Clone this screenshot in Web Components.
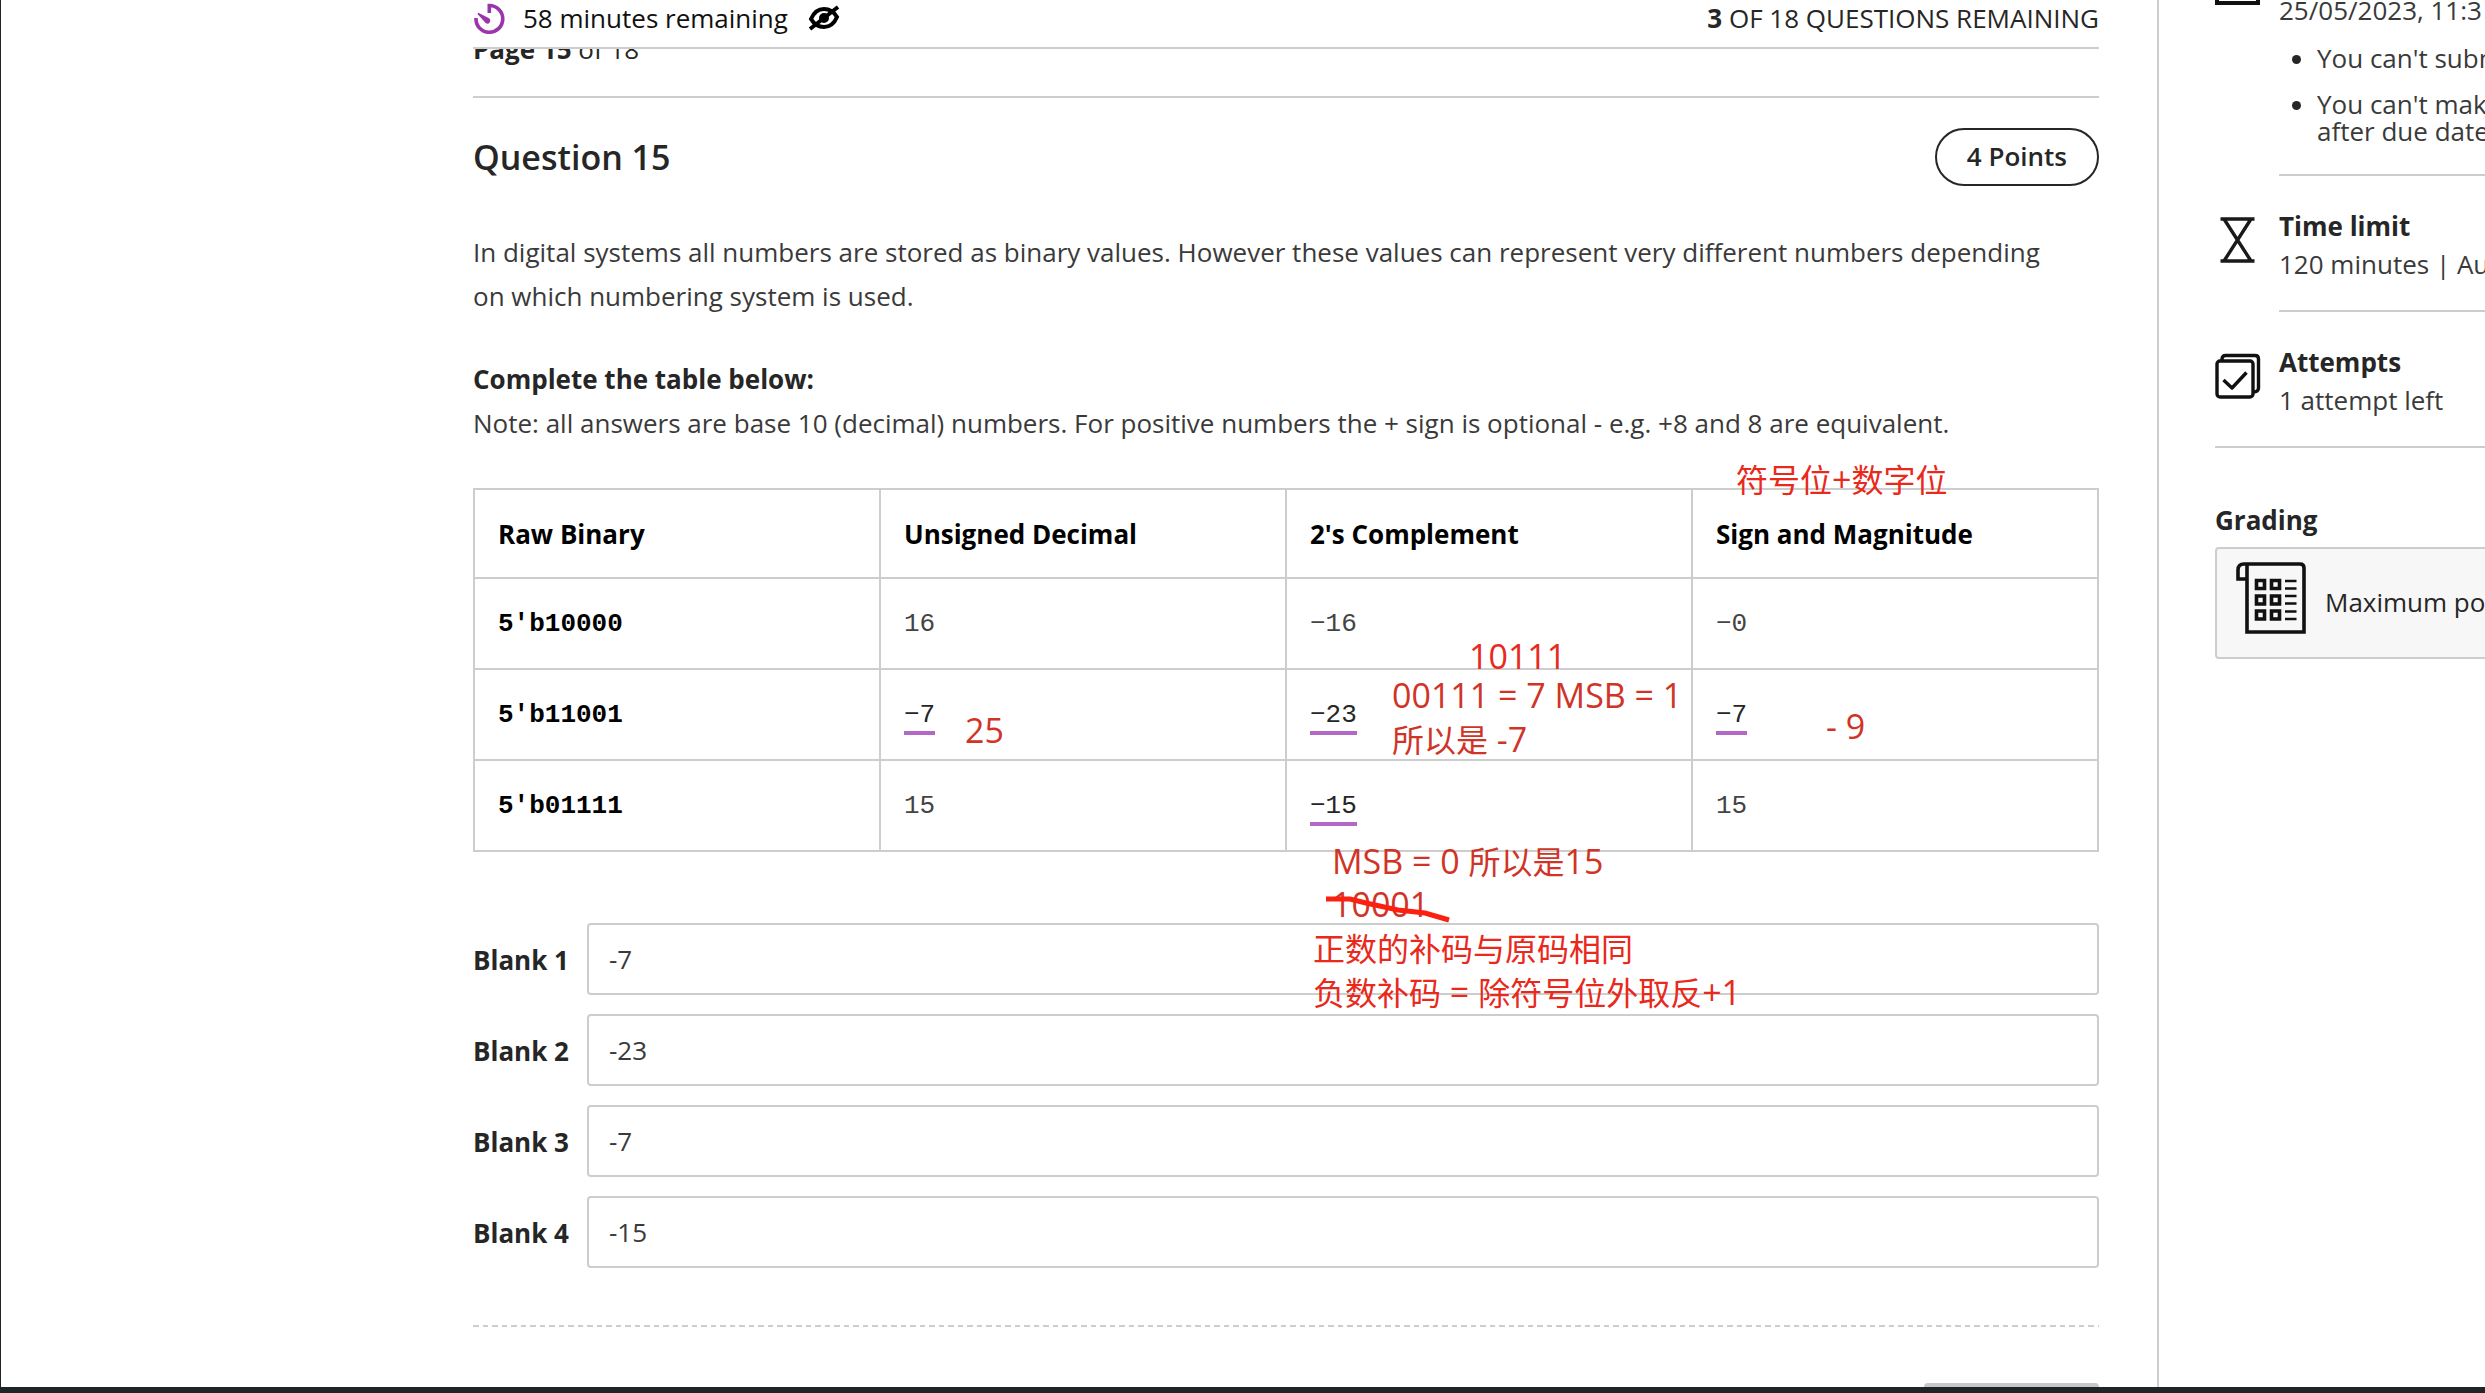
<!DOCTYPE html>
<html lang="en">
<head>
<meta charset="utf-8">
<title>Question 15</title>
<style>
html, body { height: 100%; }
body { margin: 0; background: #fff; color: #262626; font: 26px/44px "Open Sans", "Noto Sans CJK SC", sans-serif; }
</style>
</head>
<body>
<quiz-shell>
  <quiz-header slot="header"></quiz-header>
  <quiz-question></quiz-question>
  <quiz-notes slot="notes"></quiz-notes>
  <quiz-sidebar slot="side"></quiz-sidebar>
</quiz-shell>
<script>
class Base extends HTMLElement {
  constructor() {
    super();
    this.attachShadow({ mode: 'open' }).innerHTML = '<style>*{box-sizing:border-box}</style>' + this.view();
  }
}

customElements.define('quiz-shell', class extends Base {
  view() { return `
<style>
:host { display: flex; height: 100vh; box-sizing: border-box; overflow: hidden; border-left: 1px solid #1d2526; border-bottom: 6px solid #1d2526; }
main { flex: 1; min-width: 0; display: flex; flex-direction: column; padding: 0 58px 0 472px; }
.body { position: relative; flex: 1; min-height: 0; }
.scroll { height: 100%; overflow: hidden; }
aside { flex: none; width: 328px; overflow: hidden; border-left: 2px solid #cdcdcd; padding-left: 56px; }
</style>
<main><slot name="header"></slot><div class="body"><div class="scroll"><slot></slot></div><slot name="notes"></slot></div></main>
<aside><slot name="side"></slot></aside>`; }
});

customElements.define('quiz-header', class extends Base {
  view() { return `
<style>
:host { display: flex; flex: none; align-items: center; height: 49px; padding-bottom: 11px; box-sizing: border-box; border-bottom: 2px solid #cdcdcd; }
.time { display: flex; align-items: center; flex: 1; color: #111; }
.clock { margin-right: 18px; }
button { display: flex; border: 0; background: none; padding: 0; margin-left: 20px; color: #000; }
</style>
<div class="time">
<svg class="clock" width="32" height="34" viewBox="0 0 32 34" fill="none" stroke="#9a35ab" stroke-width="3.6"><path d="M16.300 12V4.500A13.400 13.400 0 1 1 3 17"/><path d="M5 12.500 16 18.200a2.200 2.200 0 0 1-2.600 3.400Z" fill="#9a35ab" stroke-width="1.600"/></svg>
<span>58 minutes remaining</span>
<button aria-label="Hide time"><svg width="32" height="26" viewBox="0 0 32 26" fill="none" stroke="currentColor" stroke-width="4"><path d="M3 14C6 7 11 4 16 4s10 3 13 8c-3 7-8 10-13 10S6 19 3 14Z"/><circle cx="16" cy="13" r="3"/><path d="M2 24 30 2"/></svg></button>
</div>
<div><b>3</b> OF 18 QUESTIONS REMAINING</div>`; }
});

customElements.define('answer-table', class extends Base {
  view() { return `
<style>
:host { display: block; margin-top: 43px; }
table { width: 100%; table-layout: fixed; border-collapse: collapse; }
tr { height: 91px; }
thead tr { height: 89px; }
th, td { border: 2px solid #cdcdcd; padding: 0 23px; text-align: left; vertical-align: middle; }
th { color: #000; font-weight: 700; }
tbody th, td { font-family: "Liberation Mono", monospace; }
td { color: #444; }
u { display: inline-block; text-decoration: none; border-bottom: 4px solid #b268c4; line-height: 32px; margin-top: 4px; color: #262626; }
</style>
<table>
<thead><tr><th scope="col">Raw Binary</th><th scope="col">Unsigned Decimal</th><th scope="col">2's Complement</th><th scope="col">Sign and Magnitude</th></tr></thead>
<tbody>
<tr><th scope="row">5'b10000</th><td>16</td><td>−16</td><td>−0</td></tr>
<tr><th scope="row">5'b11001</th><td><u>−7</u></td><td><u>−23</u></td><td><u>−7</u></td></tr>
<tr><th scope="row">5'b01111</th><td>15</td><td><u>−15</u></td><td>15</td></tr>
</tbody>
</table>`; }
});

customElements.define('blank-field', class extends Base {
  view() {
    const n = this.getAttribute('n'), v = this.getAttribute('value');
    return `
<style>
:host { display: flex; align-items: center; gap: 16px; }
label { flex: none; width: 98px; padding-top: 2px; font-weight: 700; white-space: nowrap; }
input { flex: 1; min-width: 0; height: 72px; border: 2px solid #cdcdcd; border-radius: 4px; padding: 0 20px; font: inherit; color: #3a3a3a; background: transparent; }
</style>
<label for="f">Blank ${n}</label><input id="f" type="text" value="${v}">`; }
});

customElements.define('quiz-question', class extends Base {
  view() { return `
<style>
:host { display: block; }
.page { margin-top: -22px; padding-bottom: 25px; border-bottom: 2px solid #cdcdcd; }
.head { display: flex; align-items: center; justify-content: space-between; padding-top: 30px; }
h2 { margin: 0; font-size: 34px; font-weight: 600; }
.points { height: 58px; padding: 0 30px; border: 2px solid #262626; border-radius: 29px; line-height: 53px; font-weight: 600; }
p { margin: 44px 0 0; padding-right: 40px; color: #3a3a3a; }
p + p { margin-top: 39px; }
p b { color: #262626; }
.blanks { display: grid; gap: 19px; margin-top: 71px; }
.rule { height: 2px; margin-top: 57px; background: repeating-linear-gradient(90deg, #cdcdcd 0 6px, transparent 6px 10px, #cdcdcd 10px 15px, transparent 15px 19px); }
.foot { display: flex; justify-content: flex-end; margin-top: 56px; }
.foot button { width: 175px; height: 60px; border: 0; border-radius: 4px; background: #c8c8c8; }
</style>
<div class="page"><b>Page 15</b> of 18</div>
<div class="head"><h2>Question 15</h2><span class="points">4 Points</span></div>
<p>In digital systems all numbers are stored as binary values. However these values can represent very different numbers depending on which numbering system is used.</p>
<p><b>Complete the table below:</b><br>Note: all answers are base 10 (decimal) numbers. For positive numbers the + sign is optional - e.g. +8 and 8 are equivalent.</p>
<answer-table></answer-table>
<div class="blanks">${['-7', '-23', '-7', '-15'].map((v, i) => `<blank-field n="${i + 1}" value="${v}"></blank-field>`).join('')}</div>
<div class="rule"></div>
<div class="foot"><button aria-label="Next"></button></div>`; }
});

/* Handwritten-style review notes floating freely over the question. */
customElements.define('quiz-notes', class extends Base {
  view() { return `
<style>
:host { position: absolute; inset: 0; pointer-events: none; color: #e8291c; font-size: 34px; line-height: 43px; white-space: nowrap; }
div, svg { position: absolute; }
.d { color: #d03427; }
i { font: 32px/43px "Noto Sans CJK SC", sans-serif; }
</style>
<div style="left:1263px;top:408px"><i>符号位</i>+<i>数字位</i></div>
<div style="left:996px;top:586px">10111</div>
<div class="d" style="left:919px;top:625px">00111 = 7 MSB = 1<br><i>所以是</i> -7</div>
<div class="d" style="left:492px;top:660px">25</div>
<div class="d" style="left:1353px;top:656px">- 9</div>
<div class="d" style="left:859px;top:790px">MSB = 0 <i>所以是</i>15<br>10001</div>
<div style="left:840px;top:877px"><i>正数的补码与原码相同</i><br><i>负数补码</i> = <i>除符号位外取反</i>+1</div>
<svg style="left:850px;top:840px" width="132" height="36" viewBox="0 0 132 36" fill="none" stroke="#fb2010" stroke-width="5"><path d="M3 10H27L43 14 75 21 102 24 126 31"/></svg>`; }
});

const due = '<svg width="46" height="44" viewBox="0 0 46 44" fill="none" stroke="#111" stroke-width="4"><path d="M2 2H43V42H2Z"/></svg>';
const glass = '<svg width="46" height="46" viewBox="0 0 46 46" fill="none" stroke="#1a1a1a" stroke-width="3.4"><path d="M5.500 2H39.500M5.500 44H39.500M9 2 22.500 23 9 44M36 2 22.500 23 36 44"/></svg>';
const tries = '<svg width="46" height="46" viewBox="0 0 46 46" fill="none" stroke="#111" stroke-width="3.4" stroke-linejoin="round"><rect x="2" y="8" width="36" height="36" rx="3"/><path d="M7 8V6Q7 2.500 10.500 2.500H40Q43.500 2.500 43.500 6V35Q43.500 39 38 39M8.500 27 17 35 31.500 19.500"/></svg>';
const sheet = '<svg width="70" height="72" viewBox="0 0 70 72" fill="none" stroke="#111" stroke-width="3.6"><path d="M11 2H64Q68 2 68 6V70H11ZM11 17H2V8Q2 2 8 2H12"/><path d="M20.500 18.500H28.500V26.500H20.500ZM35.500 18.500H43.500V26.500H35.500ZM20.500 34H28.500V42H20.500ZM35.500 34H43.500V42H35.500ZM20.500 49H28.500V57H20.500ZM35.500 49H43.500V57H35.500Z"/><path d="M49 19H60.500M49 26.500H60.500M49 34H60.500M49 41.500H60.500M49 49.500H60.500M49 57H60.500" stroke-width="2.600"/></svg>';

customElements.define('side-item', class extends Base {
  view() { return `
<style>
:host { display: flex; gap: 18px; line-height: 38px; }
.text { flex: 1; padding: 31px 0 27px; border-bottom: 2px solid #cdcdcd; color: #3a3a3a; }
.icon { display: flex; flex: none; width: 46px; padding-top: 41px; align-self: flex-start; }
:host([first]) .text { padding: 0 0 29px; }
:host([first]) .icon { margin-top: -30px; padding: 0; }
:host([last]) { border-bottom: 2px solid #cdcdcd; }
:host([last]) .text { border: 0; }
</style>
<div class="icon"><slot name="icon"></slot></div><div class="text"><slot></slot></div>`; }
});

customElements.define('quiz-sidebar', class extends Base {
  view() { return `
<style>
:host { display: block; white-space: nowrap; }
side-item[first] { margin-top: -9px; }
side-item b { display: block; color: #262626; }
ul { margin: 16px 0 0; padding-left: 38px; display: grid; gap: 19px; line-height: 27px; }
li::marker { color: #262626; }
h3 { margin: 53px 0 8px; font-size: 26px; line-height: 38px; font-weight: 700; }
.card { display: flex; align-items: center; gap: 19px; height: 112px; margin-right: -40px; padding: 0 19px 2px; border: 2px solid #cdcdcd; border-radius: 4px; background: #f7f7f7; font-weight: 500; }
.card svg { flex: none; margin-bottom: 9px; }
</style>
<side-item first><span slot="icon">${due}</span>25/05/2023, 11:3<ul><li>You can't subm</li><li>You can't mak<br>after due date</li></ul></side-item>
<side-item><span slot="icon">${glass}</span><b>Time limit</b>120 minutes | Au</side-item>
<side-item last><span slot="icon">${tries}</span><b>Attempts</b>1 attempt left</side-item>
<h3>Grading</h3>
<div class="card">${sheet}<span>Maximum po</span></div>`; }
});
</script>
</body>
</html>
